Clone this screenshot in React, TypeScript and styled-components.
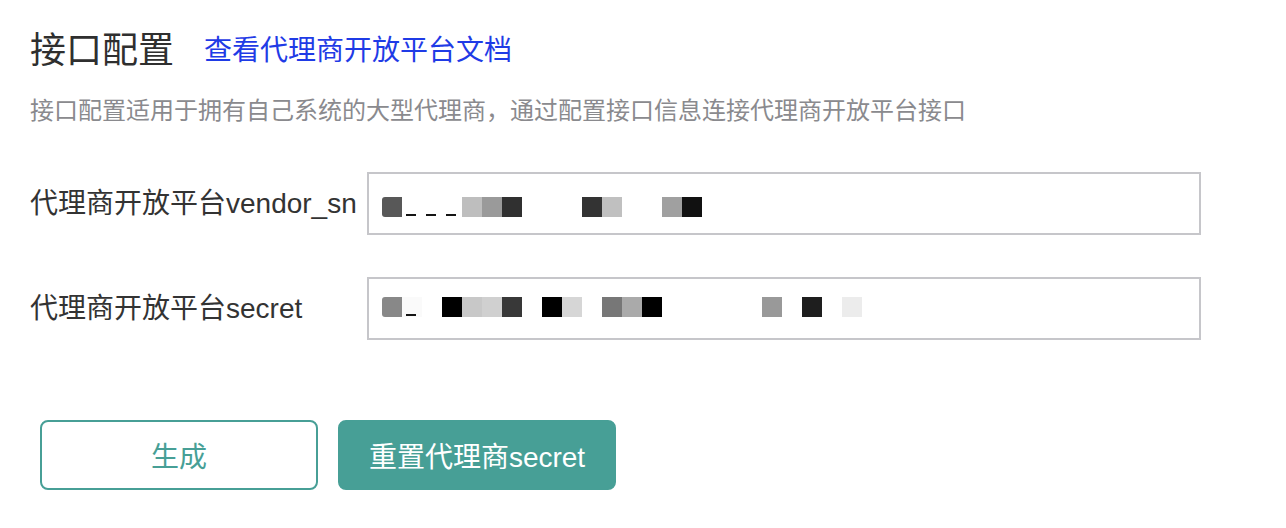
import React from "react";
import styled, { createGlobalStyle } from "styled-components";

const GlobalStyle = createGlobalStyle`
  html, body {
    margin: 0;
    padding: 0;
    background: #ffffff;
  }
  body {
    font-family: "Liberation Sans", "Noto Sans CJK SC", sans-serif;
    color: #333333;
  }
`;

const Page = styled.div`
  padding: 26px 30px 0 30px;
  width: 1171px;
`;

const Header = styled.div`
  display: flex;
  align-items: center;
  height: 50px;
`;

const Title = styled.h2`
  margin: 0;
  font-size: 36px;
  font-weight: 400;
  line-height: 50px;
  color: #2f2f2f;
`;

const DocLink = styled.a`
  margin-left: 30px;
  font-size: 28px;
  line-height: 50px;
  color: #1f3be6;
  text-decoration: none;
  cursor: pointer;
`;

const Description = styled.p`
  margin: 18px 0 0 0;
  font-size: 24px;
  line-height: 34px;
  color: #8a8a8e;
`;

const Form = styled.div`
  margin-top: 44px;
  display: flex;
  flex-direction: column;
  gap: 42px;
`;

const Row = styled.div`
  display: grid;
  grid-template-columns: 337px 834px;
  align-items: center;
`;

const Label = styled.label`
  font-size: 28px;
  line-height: 40px;
  color: #333333;
  white-space: nowrap;
`;

const Field = styled.div<{ $height: number }>`
  box-sizing: border-box;
  height: ${(p) => p.$height}px;
  border: 2px solid #c6c6ca;
  background: #ffffff;
  display: flex;
  align-items: center;
  padding-left: 13px;
`;

const Mosaic = styled.div<{ $shift: number }>`
  display: flex;
  transform: translateY(${(p) => p.$shift}px);
`;

const Cell = styled.span<{ $color: string; $mark?: boolean; $round?: boolean }>`
  display: block;
  width: 20px;
  height: 20px;
  background-color: ${(p) => p.$color};
  border-radius: ${(p) => (p.$round ? "3px 0 0 3px" : "0")};
  ${(p) =>
    p.$mark
      ? `background-image: linear-gradient(to bottom, transparent 17px, #151515 17px, #151515 19px, transparent 19px);
         background-size: 10px 20px;
         background-repeat: no-repeat;
         background-position: 4px 0;`
      : ""}
`;

const Actions = styled.div`
  margin-top: 80px;
  margin-left: 10px;
  display: flex;
  gap: 20px;
`;

const Button = styled.button<{ $primary?: boolean }>`
  box-sizing: border-box;
  width: 278px;
  height: 70px;
  border-radius: 8px;
  border: 2px solid #479f96;
  background: ${(p) => (p.$primary ? "#479f96" : "#ffffff")};
  color: ${(p) => (p.$primary ? "#ffffff" : "#479f96")};
  font-family: "Liberation Sans", "Noto Sans CJK SC", sans-serif;
  font-size: 28px;
  cursor: pointer;
  padding: 0;
`;

type CellDef = { c: string; m?: boolean; r?: boolean };

const T = "transparent";

const vendorCells: CellDef[] = [
  { c: "#585858", r: true },
  { c: "#ffffff", m: true },
  { c: "#ffffff", m: true },
  { c: "#ffffff", m: true },
  { c: "#bebebe" },
  { c: "#9a9a9a" },
  { c: "#303030" },
  { c: T },
  { c: T },
  { c: T },
  { c: "#333333" },
  { c: "#c0c0c0" },
  { c: T },
  { c: T },
  { c: "#a0a0a0" },
  { c: "#111111" },
];

const secretCells: CellDef[] = [
  { c: "#888888", r: true },
  { c: "#fafafa", m: true },
  { c: T },
  { c: "#000000" },
  { c: "#c8c8c8" },
  { c: "#d0d0d0" },
  { c: "#383838" },
  { c: T },
  { c: "#000000" },
  { c: "#d6d6d6" },
  { c: T },
  { c: "#777777" },
  { c: "#aaaaaa" },
  { c: "#000000" },
  { c: T },
  { c: T },
  { c: T },
  { c: T },
  { c: T },
  { c: "#999999" },
  { c: T },
  { c: "#1e1e1e" },
  { c: T },
  { c: "#ececec" },
];

const MaskedValue = ({ cells, shift }: { cells: CellDef[]; shift: number }) => (
  <Mosaic $shift={shift}>
    {cells.map((cell, i) => (
      <Cell key={i} $color={cell.c} $mark={cell.m} $round={cell.r} />
    ))}
  </Mosaic>
);

export default function App() {
  return (
    <>
      <GlobalStyle />
      <Page>
        <Header>
          <Title>接口配置</Title>
          <DocLink>查看代理商开放平台文档</DocLink>
        </Header>
        <Description>
          接口配置适用于拥有自己系统的大型代理商，通过配置接口信息连接代理商开放平台接口
        </Description>
        <Form>
          <Row>
            <Label>代理商开放平台vendor_sn</Label>
            <Field $height={63}>
              <MaskedValue cells={vendorCells} shift={3} />
            </Field>
          </Row>
          <Row>
            <Label>代理商开放平台secret</Label>
            <Field $height={63}>
              <MaskedValue cells={secretCells} shift={-2} />
            </Field>
          </Row>
        </Form>
        <Actions>
          <Button>生成</Button>
          <Button $primary>重置代理商secret</Button>
        </Actions>
      </Page>
    </>
  );
}
